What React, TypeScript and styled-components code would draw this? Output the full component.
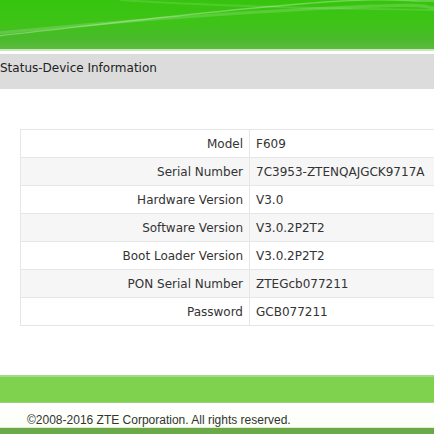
import styled, { createGlobalStyle } from 'styled-components'

const GlobalStyle = createGlobalStyle`
  html, body {
    margin: 0;
    padding: 0;
    background: #ffffff;
    overflow: hidden;
  }
  #root {
    width: 434px;
    overflow: hidden;
  }
`

const Page = styled.div`
  display: flex;
  flex-direction: column;
  width: 434px;
  height: 434px;
  overflow: hidden;
`

const Header = styled.header`
  position: relative;
  height: 49px;
  background: linear-gradient(180deg, #36c40e 0%, #3dc417 45%, #4aba2b 80%, #5cbb40 100%);
  border-bottom: 2px solid #c9e9b8;
  overflow: hidden;
`

const Swoosh = styled.svg`
  position: absolute;
  left: 0;
  top: 0;
  width: 100%;
  height: 100%;
`

const TitleBar = styled.div`
  margin-top: 3px;
  height: 36px;
  background: #dcdcdc;
  padding: 6px 0 0 0;
  box-sizing: border-box;
  font-family: 'DejaVu Sans', Verdana, sans-serif;
  font-size: 12px;
  line-height: 16px;
  color: #222;
`

const Table = styled.div`
  margin: 40px 0 0 20px;
  width: 440px;
  border-top: 1px solid #e6e6e6;
  border-left: 1px solid #e6e6e6;
  font-family: 'DejaVu Sans', Verdana, sans-serif;
  font-size: 12px;
  color: #333;
`

const Row = styled.div<{ $shaded: boolean }>`
  display: grid;
  grid-template-columns: 229px 1fr;
  height: 28px;
  box-sizing: border-box;
  border-bottom: 1px solid #e6e6e6;
  background: ${(p) => (p.$shaded ? '#f6f6f6' : '#ffffff')};
`

const Label = styled.div`
  display: flex;
  align-items: center;
  justify-content: flex-end;
  padding-right: 6px;
  border-right: 1px solid #e6e6e6;
`

const Value = styled.div`
  display: flex;
  align-items: center;
  padding-left: 6px;
`

const GreenBar = styled.div`
  margin-top: 49px;
  height: 28px;
  box-sizing: border-box;
  background: #7fd24d;
  border-top: 2px solid #a3d98a;
  border-bottom: 1px solid #9bcf7f;
`

const Footer = styled.footer`
  height: 24px;
  box-sizing: border-box;
  padding: 10px 0 0 27px;
  font-family: 'Liberation Sans', Arial, sans-serif;
  font-size: 12px;
  line-height: 14px;
  color: #333;
  background: linear-gradient(180deg, #ffffff 0%, #fbfff6 100%);
`

const BottomLine = styled.div`
  height: 6px;
  background: #6aa84a;
  border-top: 1px solid #dff0cf;
`

const rows: [string, string][] = [
  ['Model', 'F609'],
  ['Serial Number', '7C3953-ZTENQAJGCK9717A'],
  ['Hardware Version', 'V3.0'],
  ['Software Version', 'V3.0.2P2T2'],
  ['Boot Loader Version', 'V3.0.2P2T2'],
  ['PON Serial Number', 'ZTEGcb077211'],
  ['Password', 'GCB077211'],
]

export default function App() {
  return (
    <>
      <GlobalStyle />
      <Page>
        <Header>
          <Swoosh viewBox="0 0 434 49" preserveAspectRatio="none">
            <path d="M0 36 C 90 26, 200 12, 300 4 S 400 2, 434 1" stroke="rgba(255,255,255,0.3)" strokeWidth="1.5" fill="none" />
            <path d="M0 33 C 110 22, 210 14, 330 8 S 420 8, 434 8" stroke="rgba(255,255,255,0.16)" strokeWidth="3" fill="none" />
            <path d="M120 0 C 180 4, 260 8, 434 10" stroke="rgba(255,255,255,0.12)" strokeWidth="2" fill="none" />
          </Swoosh>
        </Header>
        <TitleBar>Status-Device Information</TitleBar>
        <Table>
          {rows.map(([k, v], i) => (
            <Row key={k} $shaded={i % 2 === 1}>
              <Label>{k}</Label>
              <Value>{v}</Value>
            </Row>
          ))}
        </Table>
        <GreenBar />
        <Footer>©2008-2016 ZTE Corporation. All rights reserved.</Footer>
        <BottomLine />
      </Page>
    </>
  )
}
